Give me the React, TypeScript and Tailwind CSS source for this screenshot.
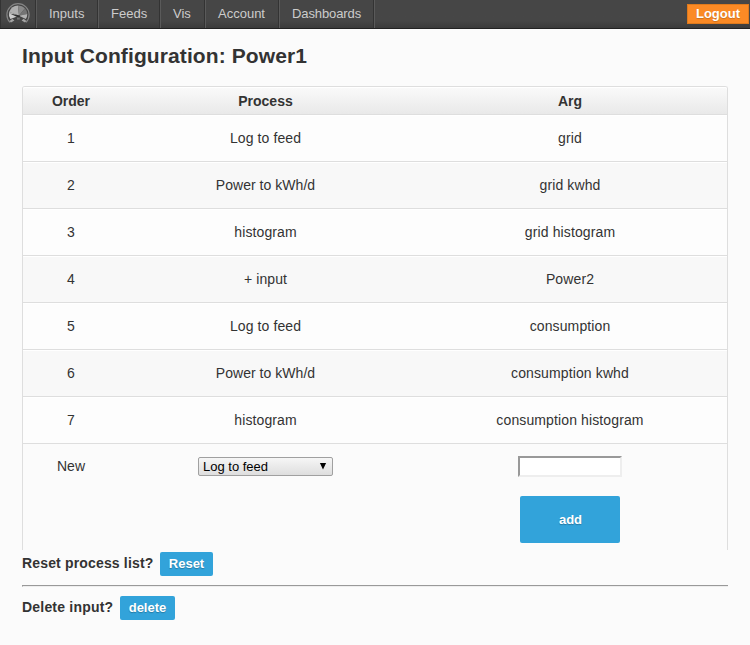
import React from 'react';

const links = [
  { label: 'Inputs', style: 'w-[62px]' },
  { label: 'Feeds', style: 'w-[62px]' },
  { label: 'Vis', style: 'w-[45px]' },
  { label: 'Account', style: 'w-[74px]' },
  { label: 'Dashboards', style: 'w-[95px] tracking-[-0.1px]' },
];

const rows = [
  ['Log to feed', 'grid'],
  ['Power to kWh/d', 'grid kwhd'],
  ['histogram', 'grid histogram'],
  ['+ input', 'Power2'],
  ['Log to feed', 'consumption'],
  ['Power to kWh/d', 'consumption kwhd'],
  ['histogram', 'consumption histogram'],
];

const columns = 'grid grid-cols-[96px_293px_316px] text-center';
const button =
  'rounded-[2px] bg-[#32a3da] text-[13px] font-bold text-white [text-shadow:0_1px_1px_rgba(0,0,0,0.25)]';

function Gauge() {
  return (
    <svg width="26" height="24" viewBox="0 0 26 24" className="block">
      <path d="M5 20.4A11.1 11.1 0 1 1 21 20.4" fill="#444" stroke="#858585" strokeWidth="1.2" />
      <path d="M5.4 17A9.2 9.2 0 0 1 4.2 10L14 13.8Z" fill="#cecece" />
      <path d="M4.2 10A9.4 9.4 0 0 1 13 3.4L14 13.8Z" fill="#b0b0b0" />
      <path d="M13 3.4A9.4 9.4 0 0 1 20 6.3L14 13.8Z" fill="#8a8a8a" />
      <path d="M20 6.3A9.4 9.4 0 0 1 22.3 12L14 13.8Z" fill="#747474" />
      <path d="M22.3 12A9.4 9.4 0 0 1 20.8 17L14 13.8Z" fill="#b2b2b2" />
      <path d="M6.4 21Q8.5 15.4 13.2 15.4T19.6 21Z" fill="#464646" />
      <path d="M4.8 11.4L15 13.6L14.2 16Z" fill="#303030" />
      <path d="M4.6 19L7.4 16.8L9.4 18.4L6 20.6ZM21.4 19L18.6 16.8L16.6 18.4L20 20.6Z" fill="#a5a5a5" />
      <path d="M12 15.5H14.8V17.6H12Z" fill="#727272" />
    </svg>
  );
}

export default function App() {
  return (
    <div className="h-[645px] w-[750px] overflow-hidden bg-[#fbfbfb] font-['Liberation_Sans',Arial,sans-serif] text-sm text-[#333]">
      <nav className="flex h-[29px] border-b border-[#222] bg-linear-to-b from-[#464646] from-75% to-[#3b3b3b] text-[13px] text-[#ccc]">
        <div className="w-[36px] border-r border-l border-[#333] pt-[2px] pl-[4px]">
          <Gauge />
        </div>
        {links.map((link) => (
          <a key={link.label} className={`${link.style} border-r border-l border-r-[#333] border-l-[#5a5a5a] pl-[12px] leading-[28px]`}>
            {link.label}
          </a>
        ))}
        <span className="w-px bg-[#5a5a5a]" />
        <button className="mt-[4px] mr-px ml-auto h-5 w-[62px] border border-[#de7a1d] bg-[#fb8a25] font-bold text-white [text-shadow:0_1px_1px_rgba(0,0,0,0.2)]">
          <span className="block leading-[18px]">Logout</span>
        </button>
      </nav>

      <main className="px-[22px]">
        <h1 className="h-[57px] pt-[13px] text-[21px] leading-7 font-bold tracking-[0.1px]">Input Configuration: Power1</h1>

        <section className="h-[464px] rounded-t-[3px] border-x border-t border-[#dedede]">
          <div className={`${columns} h-7 rounded-t-[2px] border-b border-[#dedede] bg-linear-to-b from-[#fafafa] to-[#e9e9e9] leading-[28px] font-bold shadow-[inset_0_1px_0_#fff]`}>
            <span>Order</span>
            <span>Process</span>
            <span>Arg</span>
          </div>
          {rows.map(([process, arg], i) => (
            <div key={i} className={`${columns} h-[47px] border-b border-[#dedede] leading-[46px] shadow-[inset_0_1px_0_#fff] ${i % 2 ? 'bg-[#f8f8f8]' : 'bg-[#fdfdfd]'}`}>
              <span>{i + 1}</span>
              <span className={process.startsWith('Power') ? 'tracking-[0.04px]' : 'tracking-[0.1px]'}>{process}</span>
              <span className="tracking-[0.12px]">{arg}</span>
            </div>
          ))}
          <div className={columns}>
            <span className="pt-[12px] leading-5">New</span>
            <div className="flex justify-center pt-[13px]">
              <div className="flex h-[19px] w-[135px] items-center justify-between rounded-[2px] border border-[#a0a0a0] bg-linear-to-b from-[#f6f6f6] to-[#dedede] pr-[5px] pl-[4px] text-[13px] text-black">
                <span className="leading-[17px]">Log to feed</span>
                <svg width="8" height="8" viewBox="0 0 8 8" className="mb-[2px]">
                  <path d="M.9 1h6.2L4 7.4Z" fill="#000" />
                </svg>
              </div>
            </div>
            <div className="flex flex-col items-center pt-[12px]">
              <input className="h-[21px] w-[104px] border-2 border-t-[#999] border-r-[#eee] border-b-[#eee] border-l-[#999] bg-white" />
              <button className={`${button} mt-[19px] h-[47px] w-[100px] pt-px pl-px`}>add</button>
            </div>
          </div>
        </section>

        <div className="flex h-[35px] pt-[2px]">
          <b className="w-[138px] leading-[23px] tracking-[0.16px]">Reset process list?</b>
          <button className={`${button} h-6 w-[53px]`}>Reset</button>
        </div>
        <div className="h-[2px] border-t border-b border-l border-t-[#999] border-b-[#eee] border-l-[#999]" />
        <div className="flex pt-[9px]">
          <b className="w-[98px] leading-[23px] tracking-[0.2px]">Delete input?</b>
          <button className={`${button} h-6 w-[55px]`}>delete</button>
        </div>
      </main>
    </div>
  );
}
